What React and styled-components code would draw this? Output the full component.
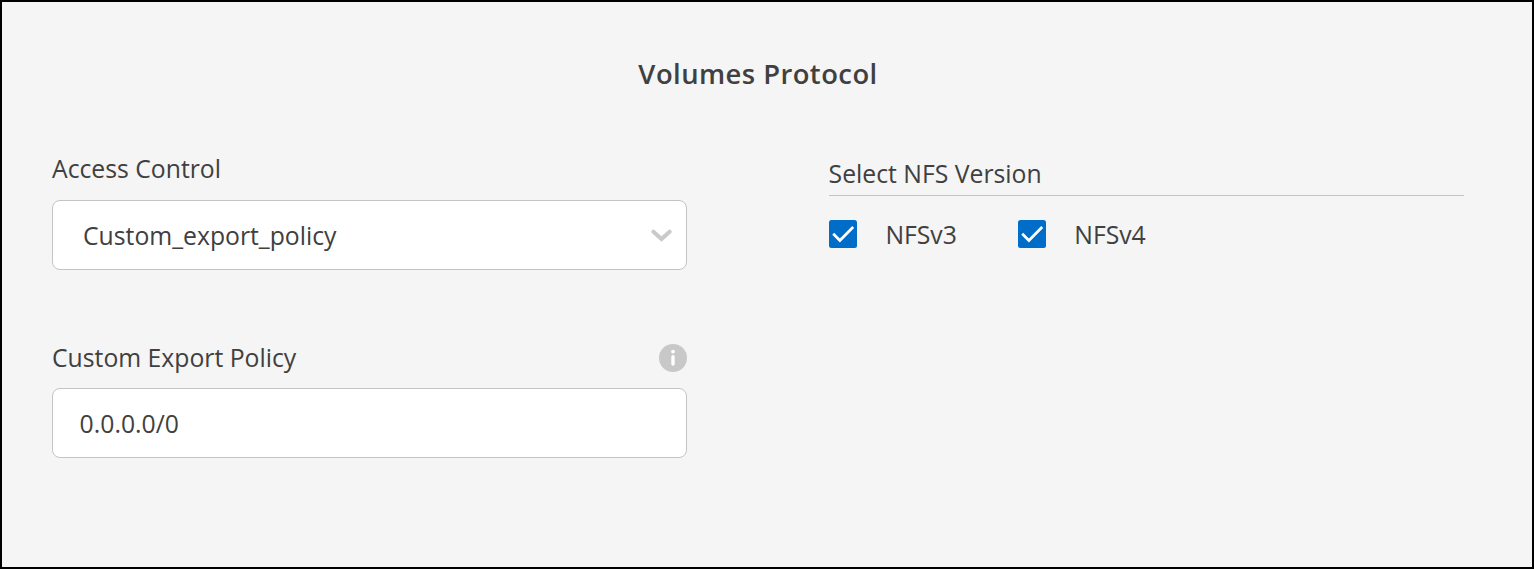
import React from "react";
import styled, { createGlobalStyle } from "styled-components";

const GlobalStyle = createGlobalStyle`
  body { margin: 0; }
  *, *::before, *::after { box-sizing: border-box; }
`;

const Panel = styled.main`
  height: 569px;
  border: 2px solid #000;
  background: #f5f5f5;
  color: #404040;
  font-family: "Open Sans", "Noto Sans", sans-serif;
  font-size: 24.75px;
  line-height: 34px;
  padding: 53px 68px 0 50px;
`;

const Title = styled.h1`
  margin: 0 0 58px;
  text-align: center;
  font-size: 27.4px;
  font-weight: 600;
  line-height: 38px;
  letter-spacing: 0.45px;
`;

const Columns = styled.div`
  display: grid;
  grid-template-columns: 635px 635px;
  column-gap: 142px;
  align-items: start;
`;

const Field = styled.div`
  margin-bottom: 70px;
`;

const FieldHeader = styled.div`
  display: flex;
  align-items: center;
  justify-content: space-between;
  height: 35px;
  padding-top: 1px;
  margin-bottom: ${(p) => p.$gap}px;
`;

const Box = styled.div`
  display: flex;
  align-items: center;
  justify-content: space-between;
  height: 70px;
  padding: 2px 14px 0 ${(p) => p.$indent}px;
  border: 1px solid #c4c4c4;
  border-radius: 8px;
  background: #fff;

  svg {
    margin-top: -2px;
  }
`;

const Versions = styled.section`
  padding-top: 6px;
`;

const VersionsTitle = styled.div`
  height: 39px;
  margin-left: -0.4px;
  border-bottom: 1px solid #c4c4c4;
`;

const Options = styled.div`
  display: flex;
  gap: 61px;
  padding-top: 22px;
`;

const Option = styled.label`
  display: flex;
  align-items: center;
  gap: 28.4px;

  svg {
    margin-top: -3px;
  }
`;

const Check = () => (
  <svg width="28" height="28" viewBox="0 0 28 28">
    <rect width="28" height="28" rx="2.5" fill="#006dc9" />
    <path d="M4.2 13.8l6.7 6.7L24.2 7" fill="none" stroke="#fff" strokeWidth="2.7" />
  </svg>
);

const Chevron = () => (
  <svg width="22" height="14" viewBox="0 0 22 14">
    <path
      d="M3.4 3.7l8.1 7.4 8.1-7.4"
      fill="none"
      stroke="#cacaca"
      strokeWidth="4"
      strokeLinecap="round"
    />
  </svg>
);

const Info = () => (
  <svg width="28" height="28" viewBox="0 0 28 28">
    <circle cx="14" cy="14" r="14" fill="#c8c8c8" />
    <rect x="12.3" y="11" width="3.4" height="10.7" rx="1.7" fill="#fff" />
    <circle cx="14" cy="7.6" r="1.9" fill="#fff" />
  </svg>
);

export default function App() {
  return (
    <Panel>
      <GlobalStyle />
      <Title>Volumes Protocol</Title>
      <Columns>
        <div>
          <Field>
            <FieldHeader $gap={14}>Access Control</FieldHeader>
            <Box $indent={30}>Custom_export_policy<Chevron /></Box>
          </Field>
          <Field>
            <FieldHeader $gap={13}>Custom Export Policy<Info /></FieldHeader>
            <Box $indent={26.6}>0.0.0.0/0</Box>
          </Field>
        </div>
        <Versions>
          <VersionsTitle>Select NFS Version</VersionsTitle>
          <Options>
            <Option><Check />NFSv3</Option>
            <Option><Check />NFSv4</Option>
          </Options>
        </Versions>
      </Columns>
    </Panel>
  );
}
